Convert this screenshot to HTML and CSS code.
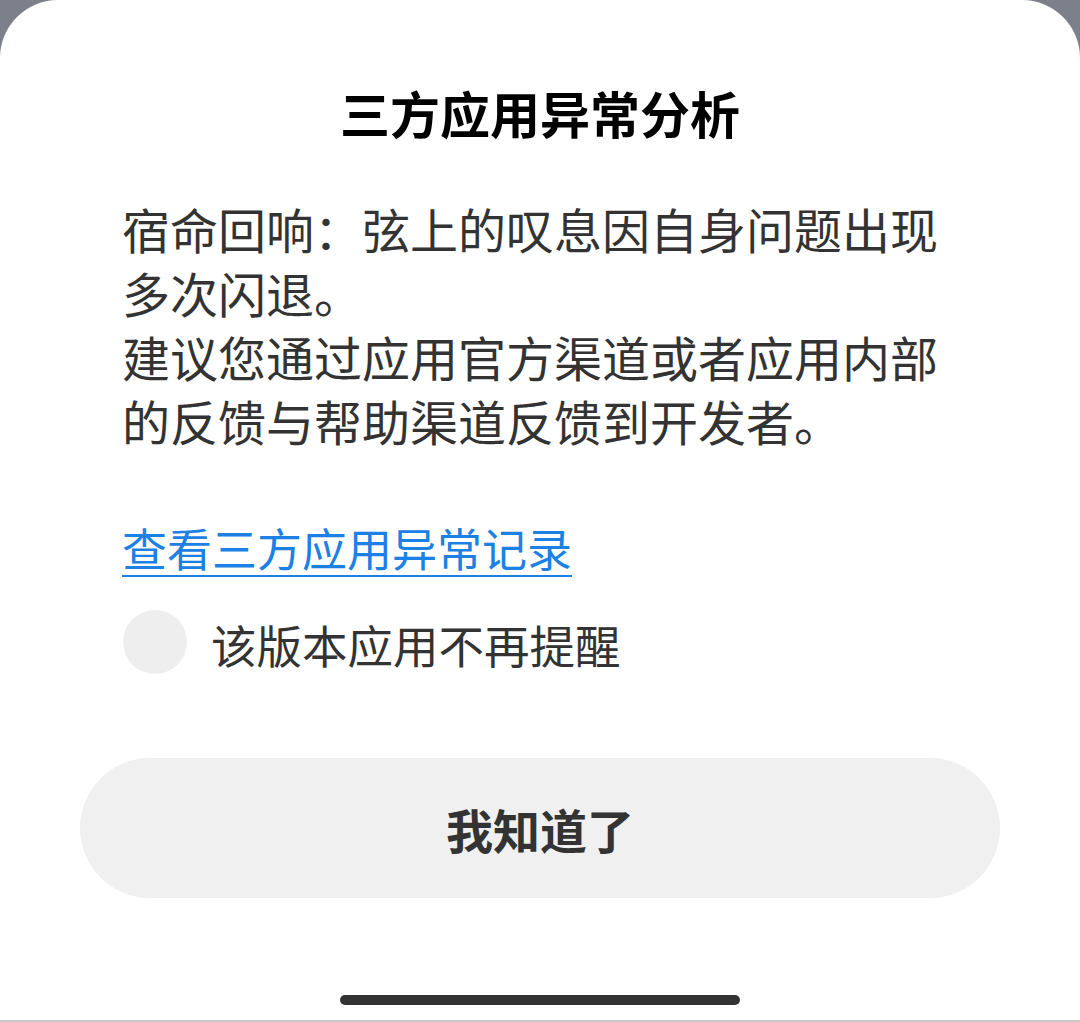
FILE: index.html
```html
<!DOCTYPE html>
<html lang="zh-CN">
<head>
<meta charset="utf-8">
<title>三方应用异常分析</title>
<link rel="stylesheet" href="styles.css">
</head>
<body>
<div class="sheet">
  <h1 class="title">三方应用异常分析</h1>
  <p class="message">宿命回响：弦上的叹息因自身问题出现多次闪退。<br>建议您通过应用官方渠道或者应用内部的反馈与帮助渠道反馈到开发者。</p>
  <a class="link" href="#">查看三方应用异常记录</a>
  <label class="check-row">
    <span class="check"></span>
    <span class="check-label">该版本应用不再提醒</span>
  </label>
  <button class="ok-btn">我知道了</button>
  <div class="home-bar"></div>
</div>
</body>
</html>
```

FILE: styles.css
```css
* { box-sizing: border-box; }
html, body {
  margin: 0;
  padding: 0;
  background: #7b808a;
}
body {
  width: 1080px;
  height: 1022px;
  overflow: hidden;
  font-family: "Noto Sans CJK SC", "Noto Sans", sans-serif;
}
.sheet {
  height: 1022px;
  background: #ffffff;
  border-radius: 58px 58px 0 0;
  border-bottom: 2px solid #c6c6c6;
  padding: 80px 0 0;
  display: flex;
  flex-direction: column;
}
.title {
  margin: 0;
  font-size: 50px;
  line-height: 64px;
  font-weight: 600;
  color: #000000;
  text-align: center;
}
.message {
  margin: 52px 0 0;
  padding: 0 122px;
  font-size: 48px;
  line-height: 64px;
  color: #333333;
}
.link {
  align-self: flex-start;
  margin: 64px 0 0 122px;
  font-size: 45px;
  line-height: 64px;
  color: #1c80e4;
  text-decoration: underline;
  text-decoration-thickness: 2px;
  text-underline-offset: 8px;
}
.check-row {
  margin: 30px 0 0 123px;
  display: flex;
  align-items: center;
  gap: 24px;
  height: 64px;
}
.check {
  width: 64px;
  height: 64px;
  border-radius: 50%;
  background: #eeeeee;
  flex: none;
}
.check-label {
  font-size: 45.5px;
  line-height: 64px;
  color: #333333;
  padding-top: 4px;
}
.ok-btn {
  margin: 84px 80px 0;
  height: 140px;
  border: none;
  border-radius: 70px;
  background: #f0f0f0;
  font-family: inherit;
  font-size: 47px;
  font-weight: 600;
  color: #333333;
}
.home-bar {
  align-self: center;
  margin-top: 97px;
  width: 400px;
  height: 10px;
  border-radius: 5px;
  background: #333333;
}
```
